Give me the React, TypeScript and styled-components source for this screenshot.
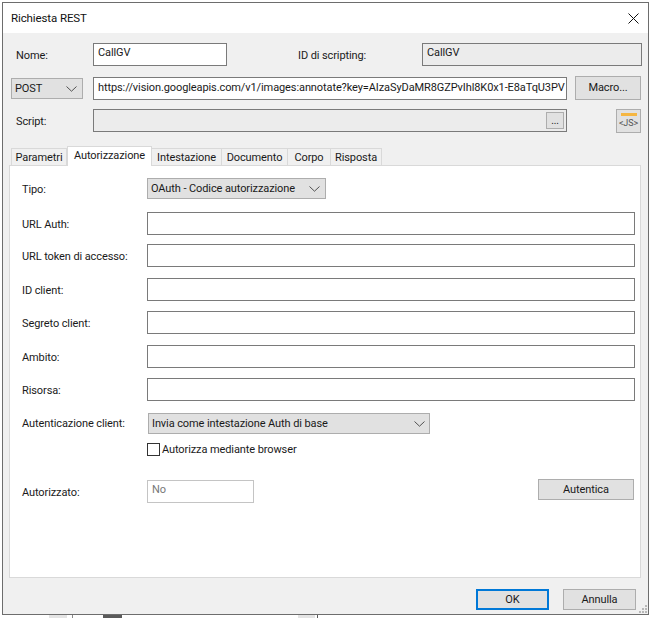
import styled, { createGlobalStyle } from "styled-components";

const FIELDS = [
  { label: "URL Auth:", gap: 13 },
  { label: "URL token di accesso:", gap: 9 },
  { label: "ID client:", gap: 11 },
  { label: "Segreto client:", gap: 10 },
  { label: "Ambito:", gap: 11 },
  { label: "Risorsa:", gap: 10 },
];

const TABS = [
  { label: "Parametri", width: 56 },
  { label: "Autorizzazione", width: 85, active: true },
  { label: "Intestazione", width: 70 },
  { label: "Documento", width: 66 },
  { label: "Corpo", width: 43 },
  { label: "Risposta", width: 51 },
];

const URL_VALUE =
  "https://vision.googleapis.com/v1/images:annotate?key=AIzaSyDaMR8GZPvIhl8K0x1-E8aTqU3PV";

function Chevron() {
  return (
    <svg width="11" height="6" viewBox="0 0 11 6" fill="none">
      <path d="M0.5 0.5L5.5 5.2L10.5 0.5" stroke="#505050" strokeWidth="1" />
    </svg>
  );
}

function App() {
  return (
    <>
      <GlobalStyle />
      <Window>
        <TitleBar>
          <Title>Richiesta REST</Title>
          <CloseIcon width="11" height="11" viewBox="0 0 11 11" fill="none">
            <path d="M0.5 0.5L10.5 10.5M10.5 0.5L0.5 10.5" stroke="#111" strokeWidth="1" />
          </CloseIcon>
        </TitleBar>

        <Body>
          <TopRow>
            <TopLabel>Nome:</TopLabel>
            <NameInput value="CallGV" readOnly />
            <ScriptIdLabel>ID di scripting:</ScriptIdLabel>
            <ScriptIdInput value="CallGV" readOnly />
          </TopRow>

          <UrlRow>
            <MethodSelect>
              POST
              <Chevron />
            </MethodSelect>
            <UrlInput value={URL_VALUE} readOnly />
            <MacroButton>Macro...</MacroButton>
          </UrlRow>

          <ScriptRow>
            <TopLabel>Script:</TopLabel>
            <ScriptBox>
              <DotsButton>...</DotsButton>
            </ScriptBox>
            <JsButton>
              <JsBar />
              &lt;JS&gt;
            </JsButton>
          </ScriptRow>

          <TabStrip>
            {TABS.map((tab) => (
              <Tab key={tab.label} $width={tab.width} $active={!!tab.active}>
                {tab.label}
              </Tab>
            ))}
          </TabStrip>

          <Panel>
            <PanelRow>
              <InputLabel>Tipo:</InputLabel>
              <TypeSelect>
                OAuth - Codice autorizzazione
                <Chevron />
              </TypeSelect>
            </PanelRow>

            {FIELDS.map((field) => (
              <PanelRow key={field.label} $gap={field.gap}>
                <InputLabel>{field.label}</InputLabel>
                <WideInput readOnly />
              </PanelRow>
            ))}

            <PanelRow $gap={12}>
              <FieldLabel>Autenticazione client:</FieldLabel>
              <ClientSelect>
                Invia come intestazione Auth di base
                <Chevron />
              </ClientSelect>
            </PanelRow>

            <CheckRow>
              <CheckBox />
              Autorizza mediante browser
            </CheckRow>

            <AuthRow>
              <InputLabel>Autorizzato:</InputLabel>
              <AuthInput value="No" readOnly />
              <AuthButton>Autentica</AuthButton>
            </AuthRow>
          </Panel>

          <Footer>
            <OkButton>OK</OkButton>
            <CancelButton>Annulla</CancelButton>
          </Footer>
          <Grip width="10" height="10" viewBox="0 0 10 10" fill="#b8b8b8">
            <rect x="7" y="1" width="2" height="2" />
            <rect x="4" y="4" width="2" height="2" />
            <rect x="7" y="4" width="2" height="2" />
            <rect x="1" y="7" width="2" height="2" />
            <rect x="4" y="7" width="2" height="2" />
            <rect x="7" y="7" width="2" height="2" />
          </Grip>
        </Body>
      </Window>

      <BehindStrip>
        <BehindBlock $left={49} $width={18} $color="#e4e4e4" />
        <BehindBlock $left={72} $width={1} $color="#8a8a8a" />
        <BehindBlock $left={103} $width={19} $color="#5a5a5a" />
        <BehindBlock $left={298} $width={17} $color="#e4e4e4" />
        <BehindBlock $left={317} $width={1} $color="#5a5a5a" />
      </BehindStrip>
    </>
  );
}

const GlobalStyle = createGlobalStyle`
  html, body {
    margin: 0;
    background: #ffffff;
  }

  * {
    box-sizing: border-box;
  }

  body, input, button {
    font-family: "Roboto", "Noto Sans", sans-serif;
    font-size: 11px;
    letter-spacing: -0.1px;
    color: #1a1a1a;
  }
`;

const Window = styled.div`
  width: 647px;
  height: 613px;
  margin: 2px 0 0 2px;
  border: 1px solid #6d6d6d;
  display: flex;
  flex-direction: column;
  background: #f0f0f0;
`;

const BehindStrip = styled.div`
  position: relative;
  height: 3px;
`;

const BehindBlock = styled.span<{ $left: number; $width: number; $color: string }>`
  position: absolute;
  top: 0;
  bottom: 0;
  left: ${({ $left }) => $left}px;
  width: ${({ $width }) => $width}px;
  background: ${({ $color }) => $color};
`;

const TitleBar = styled.div`
  height: 30px;
  flex: none;
  background: #ffffff;
  display: flex;
  align-items: center;
  justify-content: space-between;
  padding: 0 9px 0 8px;
`;

const Title = styled.span`
  font-size: 11.5px;
  color: #111;
`;

const CloseIcon = styled.svg`
  display: block;
`;

const Body = styled.div`
  flex: 1;
  position: relative;
  padding: 10px 0 0 6px;
  display: flex;
  flex-direction: column;
`;

const TopRow = styled.div`
  display: flex;
  align-items: center;
  height: 23px;
  padding-left: 84px;
  position: relative;
`;

const TopLabel = styled.span`
  position: absolute;
  left: 7px;
  top: 6px;
`;

const TextBox = styled.input`
  height: 23px;
  border: 1px solid #7a7a7a;
  background: #ffffff;
  padding: 0 4px 4px;
  outline: none;
  min-width: 0;
`;

const NameInput = styled(TextBox)`
  width: 134px;
`;

const ScriptIdLabel = styled.span`
  margin-left: 71px;
  width: 124px;
  padding-top: 2px;
`;

const ScriptIdInput = styled(TextBox)`
  width: 220px;
  background: #ececec;
`;

const UrlRow = styled.div`
  display: flex;
  align-items: flex-start;
  height: 24px;
  margin-top: 10px;
  padding-left: 2px;
`;

const DropDown = styled.div`
  display: flex;
  align-items: center;
  justify-content: space-between;
  background: #e1e1e1;
  border: 1px solid #adadad;
  height: 21px;
  padding: 0 5px 0 3px;
  white-space: nowrap;
`;

const MethodSelect = styled(DropDown)`
  width: 72px;
  margin-top: 2px;
`;

const UrlInput = styled(TextBox)`
  width: 474px;
  margin-top: 1px;
  margin-left: 10px;
  padding: 0 0 3px 4px;
`;

const FlatButton = styled.button`
  background: #e1e1e1;
  border: 1px solid #adadad;
  padding: 0;
`;

const MacroButton = styled(FlatButton)`
  width: 66px;
  height: 24px;
  margin-left: 8px;
  padding-bottom: 2px;
`;

const ScriptRow = styled.div`
  display: flex;
  height: 24px;
  margin-top: 9px;
  padding-left: 84px;
  position: relative;
`;

const ScriptBox = styled.div`
  width: 474px;
  height: 23px;
  border: 1px solid #7a7a7a;
  background: #ececec;
  display: flex;
  justify-content: flex-end;
  padding: 2px 2px 0 0;
`;

const DotsButton = styled(FlatButton)`
  width: 18px;
  height: 17px;
  font-size: 10px;
  line-height: 10px;
`;

const JsButton = styled(FlatButton)`
  width: 25px;
  height: 24px;
  margin-left: 49px;
  font-size: 9px;
  color: #555;
  display: flex;
  flex-direction: column;
  align-items: center;
  padding-top: 3px;
  line-height: 14px;
`;

const JsBar = styled.span`
  width: 16px;
  height: 3px;
  background: #f5b642;
  display: block;
`;

const TabStrip = styled.div`
  display: flex;
  align-items: flex-end;
  height: 20px;
  margin-top: 12px;
  padding-left: 2px;
`;

const Tab = styled.div<{ $width: number; $active: boolean }>`
  width: ${({ $width }) => $width}px;
  height: ${({ $active }) => ($active ? 20 : 17)}px;
  background: ${({ $active }) => ($active ? "#ffffff" : "#f0f0f0")};
  border: 1px solid #d9d9d9;
  border-bottom: none;
  border-left-width: ${({ $active }) => ($active ? 1 : 0)}px;
  text-align: center;
  line-height: ${({ $active }) => ($active ? 17 : 18)}px;
  margin-bottom: ${({ $active }) => ($active ? -1 : 0)}px;
  position: relative;
  z-index: ${({ $active }) => ($active ? 1 : 0)};

  &:first-child {
    border-left-width: 1px;
  }
`;

const Panel = styled.div`
  width: 632px;
  height: 413px;
  background: #ffffff;
  border: 1px solid #d9d9d9;
  padding: 12px 0 0 12px;
  display: flex;
  flex-direction: column;
`;

const PanelRow = styled.div<{ $gap?: number }>`
  display: flex;
  align-items: center;
  margin-top: ${({ $gap }) => $gap ?? 0}px;
`;

const FieldLabel = styled.span`
  width: 125px;
  flex: none;
`;

const InputLabel = styled(FieldLabel)`
  padding-top: 2px;
`;

const TypeSelect = styled(DropDown)`
  width: 179px;
  padding: 0 5px 0 3px;
`;

const ClientSelect = styled(DropDown)`
  width: 282px;
  margin-left: 1px;
  padding: 0 4px 0 3px;
`;

const WideInput = styled(TextBox)`
  width: 488px;
`;

const CheckRow = styled.label`
  display: flex;
  align-items: center;
  margin: 7px 0 0 125px;
  height: 16px;
  gap: 2px;
`;

const CheckBox = styled.span`
  width: 13px;
  height: 13px;
  background: #ffffff;
  border: 1px solid #333;
`;

const AuthRow = styled.div`
  display: flex;
  align-items: center;
  margin-top: 23px;
`;

const AuthInput = styled(TextBox)`
  width: 107px;
  border-color: #c4c4c4;
  color: #777;
`;

const AuthButton = styled(FlatButton)`
  width: 96px;
  height: 21px;
  align-self: flex-start;
  margin: -1px 0 0 284px;
`;

const Footer = styled.div`
  display: flex;
  justify-content: flex-end;
  gap: 14px;
  margin-top: 11px;
  padding-right: 12px;
`;

const OkButton = styled(FlatButton)`
  width: 73px;
  height: 21px;
  border: 2px solid #0078d7;
`;

const CancelButton = styled(FlatButton)`
  width: 73px;
  height: 21px;
`;

const Grip = styled.svg`
  position: absolute;
  right: 0;
  bottom: 0;
`;

export default App;
